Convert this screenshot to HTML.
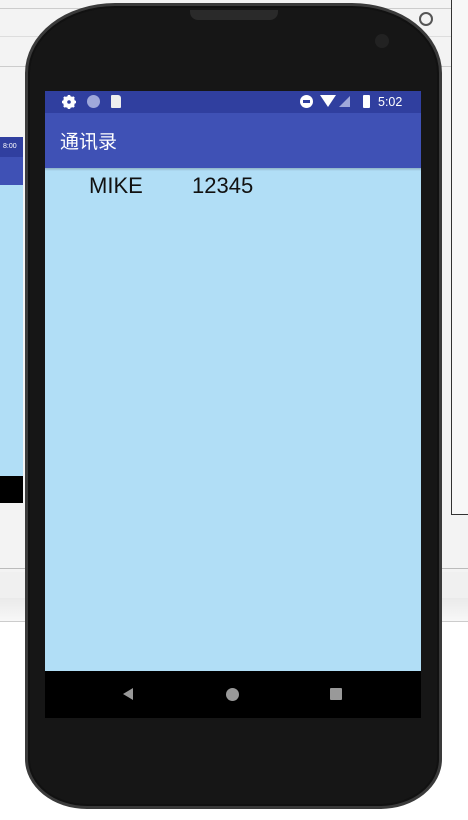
<!DOCTYPE html>
<html><head><meta charset="utf-8"><style>
*{margin:0;padding:0;box-sizing:border-box}
body{width:468px;height:820px;overflow:hidden;background:#fff;position:relative;font-family:"Liberation Sans","Noto Sans CJK SC",sans-serif}
.a{position:absolute}
</style></head><body>
<div class="a" style="left:0;top:0;width:468px;height:622px;background:#f3f3f3"></div>
<div class="a" style="left:0;top:8px;width:452px;height:1px;background:#ccc"></div>
<div class="a" style="left:0;top:36px;width:452px;height:1px;background:#ddd"></div>
<div class="a" style="left:0;top:66px;width:452px;height:1px;background:#ccc"></div>
<div class="a" style="left:451px;top:0;width:1px;height:515px;background:#333"></div>
<div class="a" style="left:451px;top:514px;width:17px;height:1px;background:#333"></div>
<div class="a" style="left:452px;top:0;width:16px;height:514px;background:#f7f7f7"></div>
<div class="a" style="left:0;top:568px;width:468px;height:1px;background:#bbb"></div>
<div class="a" style="left:0;top:572px;width:468px;height:26px;background:#f0f0f0"></div>
<div class="a" style="left:0;top:598px;width:468px;height:24px;background:linear-gradient(#eaeaea,#f8f8f8)"></div>
<div class="a" style="left:0;top:621px;width:468px;height:1px;background:#ccc"></div>
<div class="a" style="left:419px;top:12px;width:14px;height:14px;border:2px solid #555;border-radius:50%"></div>
<div class="a" style="left:0;top:137px;width:23px;height:48px;background:#3f51b5"></div>
<div class="a" style="left:0;top:137px;width:23px;height:20px;background:#303f9f;color:#fff;font-size:7px;line-height:20px;padding-left:3px">8:00</div>
<div class="a" style="left:0;top:185px;width:23px;height:291px;background:#b1def6"></div>
<div class="a" style="left:0;top:476px;width:23px;height:27px;background:#000"></div>
<div class="a" style="left:25px;top:3px;width:417px;height:806px;background:#161616;border-radius:90px 90px 62px 62px / 70px 70px 50px 50px;border:3px solid #3a3a3a;box-shadow:inset 0 0 0 2px #111"></div>
<div class="a" style="left:190px;top:10px;width:88px;height:10px;background:#2a2a2a;border-radius:0 0 8px 8px"></div>
<div class="a" style="left:375px;top:34px;width:14px;height:14px;background:#222;border-radius:50%"></div>
<div class="a" style="left:45px;top:91px;width:376px;height:22px;background:#303f9f;color:#fff;font-size:12px">
<svg class="a" style="left:17px;top:4px" width="14" height="14" viewBox="0 0 14 14"><circle cx="7" cy="7" r="4.5" fill="none" stroke="#fff" stroke-width="3"/><g stroke="#fff" stroke-width="2.6"><line x1="7" y1="0" x2="7" y2="14"/><line x1="0" y1="7" x2="14" y2="7"/><line x1="2" y1="2" x2="12" y2="12"/><line x1="12" y1="2" x2="2" y2="12"/></g><circle cx="7" cy="7" r="1.8" fill="#303f9f"/></svg>
<span class="a" style="left:42px;top:4px;width:13px;height:13px;border-radius:50%;background:#9fa8da"></span>
<span class="a" style="left:66px;top:4px;width:10px;height:13px;background:#eee;border-radius:1px 3px 1px 1px"></span>
<span class="a" style="left:255px;top:4px;width:13px;height:13px;border-radius:50%;background:#fff"><span class="a" style="left:3px;top:5px;width:7px;height:3px;background:#303f9f"></span></span>
<span class="a" style="left:275px;top:4px;width:0;height:0;border-left:8px solid transparent;border-right:8px solid transparent;border-top:12px solid #fff"></span>
<span class="a" style="left:294px;top:5px;width:0;height:0;border-left:11px solid transparent;border-bottom:11px solid #9fa8da"></span>
<span class="a" style="left:318px;top:4px;width:7px;height:13px;background:#fff;border-radius:1px"></span>
<span class="a" style="left:333px;top:3px;font-size:12.5px;line-height:16px">5:02</span>
</div>
<div class="a" style="left:45px;top:113px;width:376px;height:55px;background:#3f51b5;color:#fff;font-size:19px;line-height:55px;padding-left:15px;font-family:'Noto Sans CJK SC',sans-serif">通讯录</div>
<div class="a" style="left:45px;top:168px;width:376px;height:503px;background:#b1def6">
<div class="a" style="left:0;top:0;width:376px;height:3px;background:linear-gradient(rgba(0,0,0,.2),rgba(0,0,0,0))"></div>
<span class="a" style="left:44px;top:5px;font-size:22px;color:#111">MIKE</span>
<span class="a" style="left:147px;top:5px;font-size:22px;color:#111">12345</span>
</div>
<div class="a" style="left:45px;top:671px;width:376px;height:47px;background:#000">
<span class="a" style="left:78px;top:17px;width:0;height:0;border-top:6px solid transparent;border-bottom:6px solid transparent;border-right:10px solid #999"></span>
<span class="a" style="left:181px;top:17px;width:13px;height:13px;border-radius:50%;background:#999"></span>
<span class="a" style="left:285px;top:17px;width:12px;height:12px;background:#999;border-radius:1px"></span>
</div>
</body></html>
